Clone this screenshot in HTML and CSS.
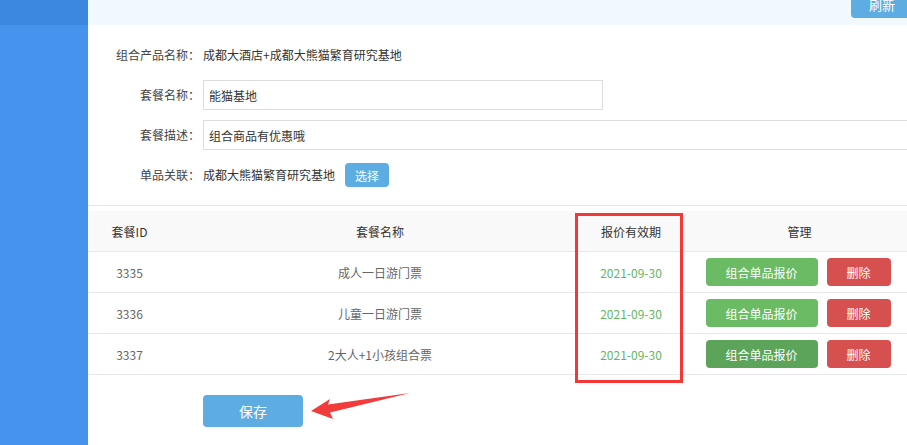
FILE: index.html
```html
<!DOCTYPE html>
<html lang="zh-CN">
<head>
    <meta charset="UTF-8">
    <meta name="viewport" content="width=device-width, initial-scale=1.0">
    <title>组合产品套餐</title>
    <link rel="stylesheet" href="styles.css">
</head>
<body>
    <div class="layout">
        <aside class="sidebar">
            <div class="sidebar-top"></div>
        </aside>

        <div class="main">
            <div class="toolbar">
                <button type="button" class="btn-refresh">刷新</button>
            </div>

            <form class="combo-form">
                <div class="form-row">
                    <label>组合产品名称：</label>
                    <span class="form-value">成都大酒店+成都大熊猫繁育研究基地</span>
                </div>
                <div class="form-row">
                    <label for="pkgName">套餐名称：</label>
                    <input type="text" id="pkgName" class="input-short" value="能猫基地">
                </div>
                <div class="form-row">
                    <label for="pkgDesc">套餐描述：</label>
                    <input type="text" id="pkgDesc" class="input-long" value="组合商品有优惠哦">
                </div>
                <div class="form-row">
                    <label>单品关联：</label>
                    <span class="form-value">成都大熊猫繁育研究基地</span>
                    <button type="button" class="btn-choose">选择</button>
                </div>
            </form>

            <div class="divider"></div>

            <table class="package-table">
                <thead>
                    <tr>
                        <th class="col-id">套餐ID</th>
                        <th class="col-name">套餐名称</th>
                        <th class="col-date">报价有效期</th>
                        <th class="col-manage">管理</th>
                    </tr>
                </thead>
                <tbody>
                    <tr>
                        <td>3335</td>
                        <td>成人一日游门票</td>
                        <td class="date">2021-09-30</td>
                        <td class="manage">
                            <button type="button" class="btn-quote">组合单品报价</button>
                            <button type="button" class="btn-delete">删除</button>
                        </td>
                    </tr>
                    <tr>
                        <td>3336</td>
                        <td>儿童一日游门票</td>
                        <td class="date">2021-09-30</td>
                        <td class="manage">
                            <button type="button" class="btn-quote">组合单品报价</button>
                            <button type="button" class="btn-delete">删除</button>
                        </td>
                    </tr>
                    <tr>
                        <td>3337</td>
                        <td>2大人+1小孩组合票</td>
                        <td class="date">2021-09-30</td>
                        <td class="manage">
                            <button type="button" class="btn-quote is-hover">组合单品报价</button>
                            <button type="button" class="btn-delete">删除</button>
                        </td>
                    </tr>
                </tbody>
            </table>

            <div class="form-actions">
                <button type="button" class="btn-save">保存</button>
            </div>
        </div>
    </div>

    <!-- annotation marks drawn over the screenshot -->
    <div class="mark-box"></div>
    <svg class="mark-arrow" width="115" height="40" viewBox="0 0 115 40">
        <polygon points="11,26 30,14 28,19.5 110,8 30,27.5 33,34" fill="#f23b3b"/>
    </svg>
</body>
</html>
```

FILE: styles.css
```css
html, body {
    margin: 0;
    height: 100%;
    overflow: hidden;
}
body {
    font-family: "Noto Sans CJK SC", "Microsoft YaHei", sans-serif;
    font-size: 12px;
    color: #333;
    background: #fff;
}
button {
    font-family: inherit;
    border: none;
    color: #fff;
    cursor: pointer;
    padding: 0;
}
.layout {
    display: flex;
    height: 100%;
}
.sidebar {
    width: 88px;
    flex-shrink: 0;
    background-color: #4593ec;
}
.sidebar-top {
    height: 25px;
    background-color: #3c87df;
}
.main {
    width: 838px;
    flex-shrink: 0;
}
.toolbar {
    height: 25px;
    background-color: #f1f8fe;
    display: flex;
    justify-content: flex-end;
    align-items: flex-start;
}
.btn-refresh {
    width: 62px;
    height: 27px;
    margin-top: -9px;
    margin-right: 13px;
    border-radius: 4px;
    background-color: #5dade2;
    font-size: 13px;
    line-height: 27px;
}

/* form */
.combo-form {
    padding-top: 15px;
    display: flex;
    flex-direction: column;
    gap: 10px;
}
.form-row {
    display: flex;
    align-items: center;
    height: 30px;
}
.form-row label {
    width: 112px;
    text-align: right;
    color: #444;
    line-height: 30px;
}
.form-value {
    margin-left: 3px;
    line-height: 30px;
}
.form-row input {
    margin-left: 3px;
    height: 30px;
    box-sizing: border-box;
    border: 1px solid #ddd;
    padding: 0 5px;
    font-family: inherit;
    font-size: 12px;
    color: #333;
    outline: none;
}
.input-short {
    width: 400px;
}
.input-long {
    width: 720px;
}
.btn-choose {
    margin-left: 10px;
    width: 44px;
    height: 24px;
    border-radius: 4px;
    background-color: #5dade2;
    font-size: 12px;
}
.divider {
    margin-top: 15px;
    border-top: 1px solid #e6e6e6;
}

/* table */
.package-table {
    margin-top: 5px;
    width: 838px;
    border-collapse: separate;
    border-spacing: 0;
    table-layout: fixed;
}
.package-table th,
.package-table td {
    height: 41px;
    box-sizing: border-box;
    padding: 0;
    text-align: center;
    border-bottom: 1px solid #e8e8e8;
    font-weight: normal;
}
.package-table th {
    background-color: #f9f9f9;
    color: #333;
}
.package-table td {
    color: #666;
}
.col-id { width: 83px; }
.col-name { width: 418px; }
.col-date { width: 84px; }
.package-table td.date {
    color: #62b75e;
}
.manage {
    font-size: 0;
    padding-right: 3px !important;
}
.btn-quote,
.btn-delete {
    height: 28px;
    border-radius: 4px;
    font-size: 12px;
    vertical-align: middle;
}
.btn-quote {
    width: 112px;
    background-color: #6abb63;
}
.btn-quote.is-hover,
.btn-quote:hover {
    background-color: #5ca459;
}
.btn-delete {
    width: 64px;
    margin-left: 9px;
    background-color: #d65050;
}

.form-actions {
    margin-top: 20px;
    padding-left: 115px;
}
.btn-save {
    width: 100px;
    height: 32px;
    border-radius: 4px;
    background-color: #5dade2;
    font-size: 14px;
}

/* annotations */
.mark-box {
    position: absolute;
    left: 575px;
    top: 213px;
    width: 108px;
    height: 170px;
    box-sizing: border-box;
    border: 3px solid #f43838;
}
.mark-arrow {
    position: absolute;
    left: 300px;
    top: 385px;
}
```
